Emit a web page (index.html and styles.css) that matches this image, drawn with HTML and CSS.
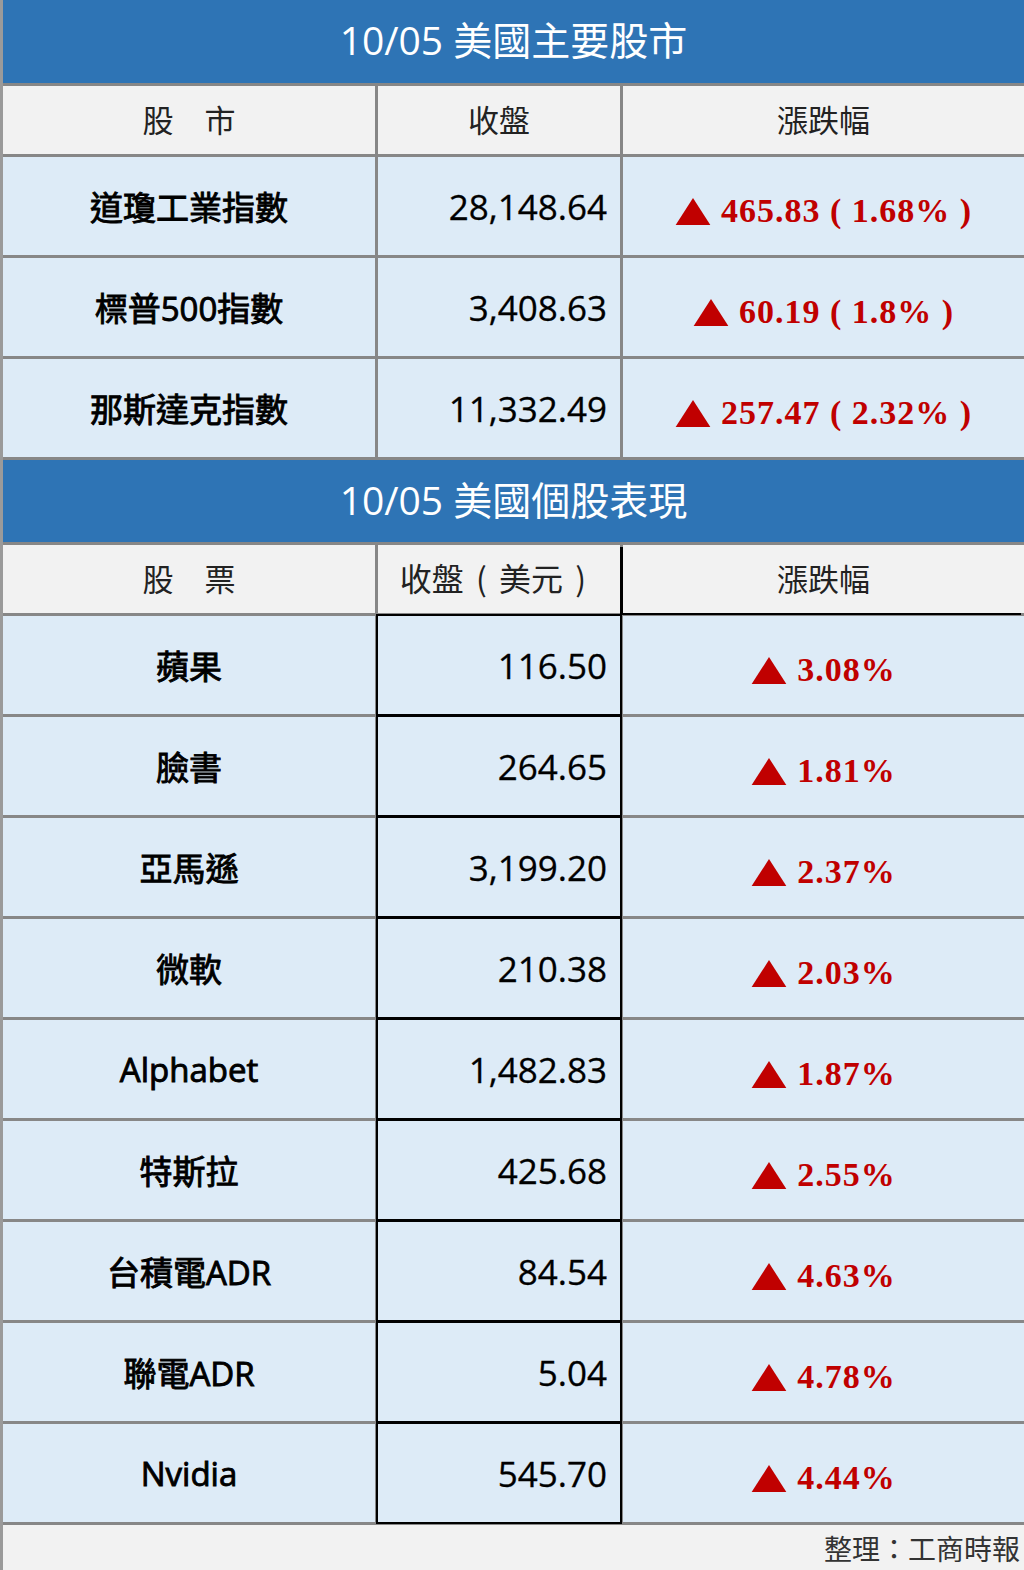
FILE: index.html
```html
<!DOCTYPE html>
<html lang="zh-Hant">
<head>
<meta charset="utf-8">
<title>10/05 美國主要股市</title>
<link rel="stylesheet" href="styles.css">
</head>
<body>
<div class="sheet">
  <div class="title title-first">10/05 美國主要股市</div>
  <div class="head">股　市</div>
  <div class="head">收盤</div>
  <div class="head">漲跌幅</div>

  <div class="cell name">道瓊工業指數</div>
  <div class="cell num">28,148.64</div>
  <div class="cell chg"><svg class="tri" viewBox="0 0 36 28"><path d="M18 0 L36 28 L0 28 Z"/></svg><span>465.83 ( 1.68% )</span></div>

  <div class="cell name">標普500指數</div>
  <div class="cell num">3,408.63</div>
  <div class="cell chg"><svg class="tri" viewBox="0 0 36 28"><path d="M18 0 L36 28 L0 28 Z"/></svg><span>60.19 ( 1.8% )</span></div>

  <div class="cell name">那斯達克指數</div>
  <div class="cell num">11,332.49</div>
  <div class="cell chg"><svg class="tri" viewBox="0 0 36 28"><path d="M18 0 L36 28 L0 28 Z"/></svg><span>257.47 ( 2.32% )</span></div>

  <div class="title title-second">10/05 美國個股表現</div>
  <div class="head">股　票</div>
  <div class="head head-wide">收盤<span class="paren">(</span>美元<span class="paren">)</span></div>
  <div class="head head-dark">漲跌幅</div>

  <div class="cell name">蘋果</div>
  <div class="cell num boxed">116.50</div>
  <div class="cell chg"><svg class="tri" viewBox="0 0 36 28"><path d="M18 0 L36 28 L0 28 Z"/></svg><span>3.08%</span></div>

  <div class="cell name">臉書</div>
  <div class="cell num boxed">264.65</div>
  <div class="cell chg"><svg class="tri" viewBox="0 0 36 28"><path d="M18 0 L36 28 L0 28 Z"/></svg><span>1.81%</span></div>

  <div class="cell name">亞馬遜</div>
  <div class="cell num boxed">3,199.20</div>
  <div class="cell chg"><svg class="tri" viewBox="0 0 36 28"><path d="M18 0 L36 28 L0 28 Z"/></svg><span>2.37%</span></div>

  <div class="cell name">微軟</div>
  <div class="cell num boxed">210.38</div>
  <div class="cell chg"><svg class="tri" viewBox="0 0 36 28"><path d="M18 0 L36 28 L0 28 Z"/></svg><span>2.03%</span></div>

  <div class="cell name">Alphabet</div>
  <div class="cell num boxed">1,482.83</div>
  <div class="cell chg"><svg class="tri" viewBox="0 0 36 28"><path d="M18 0 L36 28 L0 28 Z"/></svg><span>1.87%</span></div>

  <div class="cell name">特斯拉</div>
  <div class="cell num boxed">425.68</div>
  <div class="cell chg"><svg class="tri" viewBox="0 0 36 28"><path d="M18 0 L36 28 L0 28 Z"/></svg><span>2.55%</span></div>

  <div class="cell name">台積電ADR</div>
  <div class="cell num boxed">84.54</div>
  <div class="cell chg"><svg class="tri" viewBox="0 0 36 28"><path d="M18 0 L36 28 L0 28 Z"/></svg><span>4.63%</span></div>

  <div class="cell name">聯電ADR</div>
  <div class="cell num boxed">5.04</div>
  <div class="cell chg"><svg class="tri" viewBox="0 0 36 28"><path d="M18 0 L36 28 L0 28 Z"/></svg><span>4.78%</span></div>

  <div class="cell name">Nvidia</div>
  <div class="cell num boxed">545.70</div>
  <div class="cell chg"><svg class="tri" viewBox="0 0 36 28"><path d="M18 0 L36 28 L0 28 Z"/></svg><span>4.44%</span></div>

  <div class="footer">整理：工商時報</div>
</div>
</body>
</html>
```

FILE: styles.css
```css
html, body {
  margin: 0;
  padding: 0;
  background: #f2f2f2;
}

.sheet {
  width: 1024px;
  box-sizing: border-box;
  border-left: 3px solid #9a9a9a;
  display: grid;
  grid-template-columns: 372px 242px 401px;
  gap: 3px;
  background: #878787;
  font-family: "Open Sans", "Noto Sans CJK TC", sans-serif;
  color: #111;
}

.title {
  grid-column: 1 / -1;
  box-sizing: border-box;
  padding-bottom: 8px;
  background: #2e74b5;
  color: #fff;
  font-family: "Open Sans", "Noto Sans CJK TC", sans-serif;
  font-size: 39px;
  display: flex;
  align-items: center;
  justify-content: center;
}

.title-first {
  height: 83px;
}

.title-second {
  height: 82px;
  padding-bottom: 6px;
}

.head {
  height: 68px;
  box-sizing: border-box;
  padding-bottom: 4px;
  background: #f2f2f2;
  color: #222;
  font-family: "Noto Sans CJK TC", sans-serif;
  font-size: 31px;
  display: flex;
  align-items: center;
  justify-content: center;
}

.head-wide {
  font-size: 32px;
}

.paren {
  display: inline-block;
  width: 1.1em;
  text-align: center;
}

.head-dark {
  box-shadow: -3px 2px 0 0 #000;
}

.cell {
  height: 98px;
  background: #ddebf7;
  display: flex;
  align-items: center;
}

.name {
  justify-content: center;
  font-size: 33px;
  font-weight: 400;
  color: #000;
  -webkit-text-stroke: 0.9px #000;
}

.num {
  justify-content: flex-end;
  padding-right: 13px;
  font-size: 35px;
  color: #000;
  -webkit-text-stroke: 0.3px #000;
}

.boxed {
  box-shadow: 0 0 0 2px #000;
}

.chg {
  justify-content: center;
  padding-top: 10px;
  box-sizing: border-box;
  color: #c00000;
  font-family: "Liberation Serif", serif;
  font-weight: 700;
  font-size: 34px;
  letter-spacing: 1px;
}

.tri {
  width: 36px;
  height: 27px;
  margin-right: 10px;
  fill: #c00000;
  flex: none;
}

.footer {
  grid-column: 1 / -1;
  height: 45px;
  background: #f2f2f2;
  color: #333;
  font-family: "Noto Sans CJK TC", sans-serif;
  font-size: 28px;
  display: flex;
  align-items: center;
  justify-content: flex-end;
  padding-right: 4px;
}
```
